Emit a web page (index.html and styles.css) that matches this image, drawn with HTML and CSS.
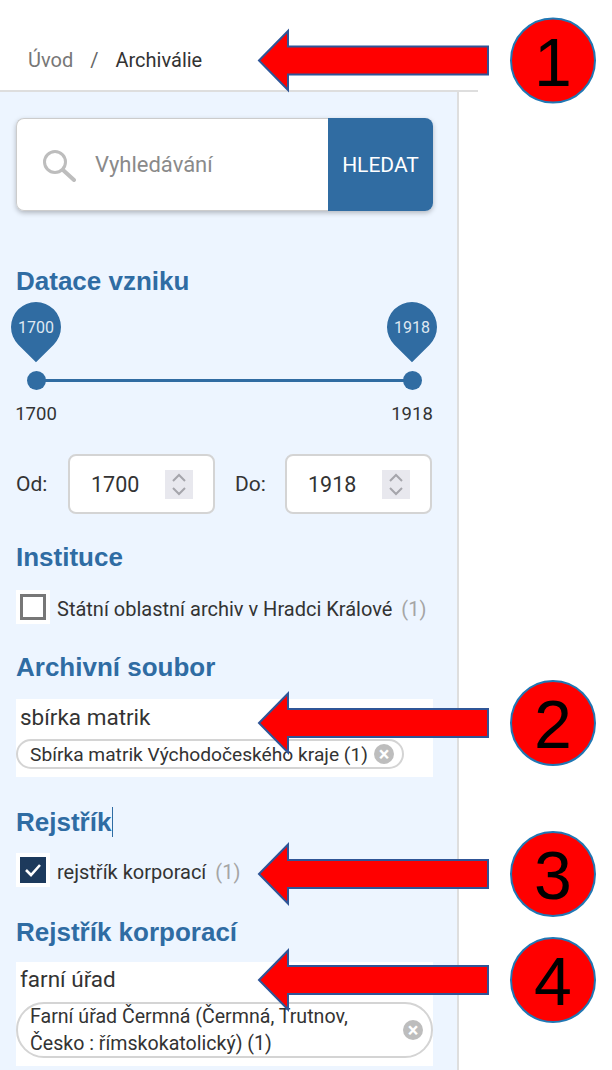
FILE: index.html
```html
<!DOCTYPE html>
<html lang="cs">
<head>
    <meta charset="UTF-8">
    <meta name="viewport" content="width=device-width, initial-scale=1.0">
    <title>Archiválie</title>
    <link rel="stylesheet" href="styles.css">
</head>
<body>

<nav class="breadcrumb">
    <a href="#">Úvod</a>
    <span class="sep">/</span>
    <span class="current">Archiválie</span>
</nav>

<aside class="sidebar">
    <form class="search">
        <div class="search-field">
            <svg class="search-icon" width="34" height="34" viewBox="0 0 34 34">
                <circle cx="13" cy="14" r="10.5" fill="none" stroke="#bdbdbd" stroke-width="3"/>
                <path d="M21 22 L32 32" stroke="#bdbdbd" stroke-width="4" stroke-linecap="round"/>
            </svg>
            <span class="placeholder">Vyhledávání</span>
        </div>
        <button type="button" class="search-btn">HLEDAT</button>
    </form>

    <h2 class="heading heading-date">Datace vzniku</h2>
    <div class="slider">
        <div class="track"></div>
        <div class="handle">
            <div class="pin"><span>1700</span></div>
            <div class="dot"></div>
            <div class="limit">1700</div>
        </div>
        <div class="handle">
            <div class="pin"><span>1918</span></div>
            <div class="dot"></div>
            <div class="limit">1918</div>
        </div>
    </div>

    <div class="range">
        <label class="range-label">Od:</label>
        <div class="number">
            <span>1700</span>
            <svg class="stepper" width="28" height="29" viewBox="0 0 28 29">
                <path d="M8 11 L14 5 L20 11 M8 18 L14 24 L20 18" fill="none" stroke="#a5a5ab" stroke-width="2"/>
            </svg>
        </div>
        <label class="range-label range-label-to">Do:</label>
        <div class="number">
            <span>1918</span>
            <svg class="stepper" width="28" height="29" viewBox="0 0 28 29">
                <path d="M8 11 L14 5 L20 11 M8 18 L14 24 L20 18" fill="none" stroke="#a5a5ab" stroke-width="2"/>
            </svg>
        </div>
    </div>

    <h2 class="heading">Instituce</h2>
    <div class="check-row">
        <div class="check-patch"><span class="check"></span></div>
        <span class="check-label">Státní oblastní archiv v Hradci Králové</span>
        <span class="count">(1)</span>
    </div>

    <h2 class="heading">Archivní soubor</h2>
    <div class="combo">
        <div class="combo-input">sbírka matrik</div>
        <div class="chip chip-short">
            <span>Sbírka matrik Východočeského kraje (1)</span>
            <span class="chip-close">×</span>
        </div>
    </div>

    <h2 class="heading heading-wide"><span class="caret">Rejstřík</span></h2>
    <div class="check-row check-row-tight">
        <div class="check-patch">
            <span class="check check-on">
                <svg width="26" height="26" viewBox="0 0 26 26">
                    <path d="M6 13 L11 18 L20 8" fill="none" stroke="#fff" stroke-width="2.6"/>
                </svg>
            </span>
        </div>
        <span class="check-label">rejstřík korporací</span>
        <span class="count">(1)</span>
    </div>

    <h2 class="heading heading-wide">Rejstřík korporací</h2>
    <div class="combo combo-tight">
        <div class="combo-input">farní úřad</div>
        <div class="chip chip-tall">
            <span class="chip-text">Farní úřad Čermná (Čermná, Trutnov, Česko : římskokatolický) (1)</span>
            <span class="chip-close">×</span>
        </div>
    </div>
</aside>

<!-- sipky a cisla pres obsah -->
<svg class="callouts" width="612" height="1070" viewBox="0 0 612 1070">
    <g transform="translate(0,60.5)">
        <path class="arrow" d="M259 0 L288 -29.5 L288 -14 L488 -14 L488 14 L288 14 L288 29.5 Z"/>
        <circle class="badge" cx="553" cy="0" r="42"/>
        <text class="badge-num" x="553" y="25">1</text>
    </g>
    <g transform="translate(0,723)">
        <path class="arrow" d="M259 0 L288 -29.5 L288 -14 L488 -14 L488 14 L288 14 L288 29.5 Z"/>
        <circle class="badge" cx="553" cy="0" r="42"/>
        <text class="badge-num" x="553" y="25">2</text>
    </g>
    <g transform="translate(0,874)">
        <path class="arrow" d="M259 0 L288 -29.5 L288 -14 L488 -14 L488 14 L288 14 L288 29.5 Z"/>
        <circle class="badge" cx="553" cy="0" r="42"/>
        <text class="badge-num" x="553" y="25">3</text>
    </g>
    <g transform="translate(0,980)">
        <path class="arrow" d="M259 0 L288 -29.5 L288 -14 L488 -14 L488 14 L288 14 L288 29.5 Z"/>
        <circle class="badge" cx="553" cy="0" r="42"/>
        <text class="badge-num" x="553" y="25">4</text>
    </g>
</svg>

</body>
</html>
```

FILE: styles.css
```css
html, body {
    margin: 0;
    padding: 0;
    height: 1070px;
    overflow: hidden;
    background-color: #fff;
}

body {
    font-family: Roboto, 'Liberation Sans', sans-serif;
    color: #333;
    position: relative;
}

.breadcrumb {
    width: 478px;
    height: 92px;
    box-sizing: border-box;
    padding: 30px 0 0 28px;
    border-bottom: 2px solid #dedede;
    display: flex;
    align-items: center;
    font-size: 20px;
}

.breadcrumb a {
    color: #777;
    text-decoration: none;
}

.breadcrumb .sep {
    color: #666;
    margin: 0 17px;
}

.breadcrumb .current {
    color: #333;
}

.sidebar {
    width: 459px;
    height: 978px;
    box-sizing: border-box;
    padding: 26px 24px 0 16px;
    background-color: #edf5ff;
    border-right: 2px solid #dedede;
}

/* hledani */
.search {
    display: flex;
    height: 93px;
    border-radius: 8px;
    box-shadow: 0 2px 5px rgba(0, 0, 0, 0.25);
}

.search-field {
    flex: 1;
    display: flex;
    align-items: center;
    box-sizing: border-box;
    padding-left: 25px;
    background-color: #fff;
    border: 1px solid #ccc;
    border-right: none;
    border-radius: 8px 0 0 8px;
}

.search-icon {
    margin-right: 19px;
}

.placeholder {
    font-size: 22px;
    color: #8a8a8a;
}

.search-btn {
    width: 105px;
    border: none;
    padding: 0;
    background-color: #306ca2;
    color: #fff;
    font-family: inherit;
    font-size: 21px;
    border-radius: 0 8px 8px 0;
}

/* nadpisy */
.heading {
    margin: 28px 0 0 0;
    font-family: 'Liberation Sans', sans-serif;
    font-size: 26px;
    line-height: 30px;
    font-weight: bold;
    color: #2f6ca3;
}

.heading-date {
    margin-top: 55px;
}

.heading-wide {
    margin-top: 30px;
}

.caret {
    border-right: 1px solid #2f6ca3;
    padding-right: 1px;
}

/* slider */
.slider {
    position: relative;
    display: flex;
    justify-content: space-between;
    width: 426px;
    margin: 6px 0 0 -5px;
}

.track {
    position: absolute;
    left: 25px;
    right: 25px;
    top: 77px;
    height: 3px;
    background-color: #306ca2;
}

.handle {
    position: relative;
    width: 50px;
    display: flex;
    flex-direction: column;
    align-items: center;
}

.pin {
    width: 50px;
    height: 50px;
    display: flex;
    align-items: center;
    justify-content: center;
    position: relative;
    color: #dfe8f2;
    font-size: 16px;
}

.pin::before {
    content: "";
    position: absolute;
    inset: 0;
    background-color: #306ca2;
    border-radius: 50% 50% 0 50%;
    transform: rotate(45deg);
}

.pin span {
    position: relative;
}

.dot {
    width: 19px;
    height: 19px;
    margin-top: 19px;
    border-radius: 50%;
    background-color: #306ca2;
}

.limit {
    margin-top: 12px;
    font-size: 18.5px;
    line-height: 24px;
}

/* od - do */
.range {
    display: flex;
    align-items: center;
    margin-top: 28px;
}

.range-label {
    width: 52px;
    font-size: 21px;
}

.range-label-to {
    width: 50px;
    margin-left: 20px;
}

.number {
    width: 147px;
    height: 60px;
    box-sizing: border-box;
    padding: 0 20px 0 21px;
    display: flex;
    align-items: center;
    justify-content: space-between;
    background-color: #fff;
    border: 2px solid #d4d4d4;
    border-radius: 8px;
    font-size: 21.5px;
}

.stepper {
    background-color: #e8e8ee;
}

/* zaskrtavaci radky */
.check-row {
    display: flex;
    align-items: center;
    margin-top: 18px;
    height: 34px;
    font-size: 20px;
}

.check-row-tight {
    margin-top: 16px;
}

.check-patch {
    width: 34px;
    height: 34px;
    display: flex;
    align-items: center;
    justify-content: center;
    background-color: #fff;
    margin-right: 7px;
}

.check {
    width: 26px;
    height: 26px;
    box-sizing: border-box;
    border: 3px solid #777;
    display: block;
}

.check-on {
    border: none;
    background-color: #1d3a5c;
}

.check-on svg {
    display: block;
}

.check-label {
    padding-top: 3px;
}

.count {
    margin-left: 9px;
    padding-top: 3px;
    color: #a5a5a5;
}

/* vyber s tagem */
.combo {
    margin-top: 17px;
    background-color: #fff;
    padding: 4px 0 8px 0;
}

.combo-tight {
    margin-top: 15px;
    padding-top: 3px;
}

.combo-input {
    padding-left: 4px;
    font-size: 22.5px;
    line-height: 28px;
}

.chip {
    display: flex;
    align-items: center;
    justify-content: space-between;
    box-sizing: border-box;
    margin-top: 8px;
    padding: 0 8px 0 12px;
    border: 2px solid #d4d4d4;
    border-radius: 28px;
}

.chip-short {
    width: 388px;
    height: 30px;
    font-size: 19.2px;
}

.chip-tall {
    height: 56px;
    margin-top: 9px;
    font-size: 19.6px;
    line-height: 27px;
}

.chip-text {
    width: 350px;
}

.chip-close {
    width: 20px;
    height: 20px;
    border-radius: 50%;
    background-color: #bdbdbd;
    color: #fff;
    font-size: 20px;
    font-weight: bold;
    line-height: 20px;
    text-align: center;
}

/* sipky */
.callouts {
    position: absolute;
    left: 0;
    top: 0;
}

.arrow {
    fill: #f00;
    stroke: #2f5597;
    stroke-width: 2;
}

.badge {
    fill: #f00;
    stroke: #1f77b4;
    stroke-width: 2;
}

.badge-num {
    font-family: 'Liberation Sans', sans-serif;
    font-size: 68px;
    text-anchor: middle;
    fill: #000;
}
```
